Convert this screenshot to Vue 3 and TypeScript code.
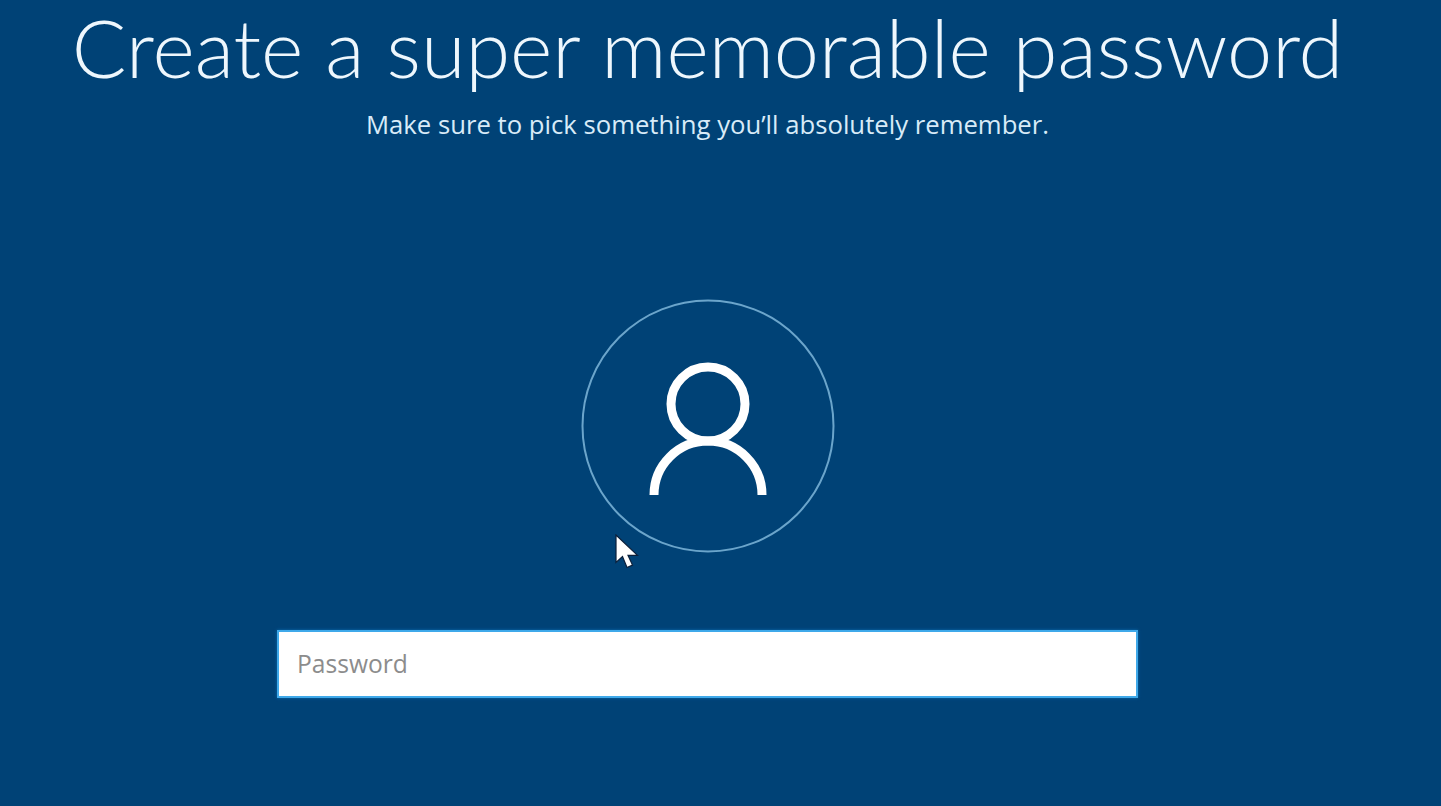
<script setup lang="ts">
import { ref } from 'vue'

const password = ref('')
</script>

<template>
  <main class="page">
    <h1 class="title">Create a super memorable password</h1>
    <p class="subtitle">Make sure to pick something you’ll absolutely remember.</p>

    <div class="avatar">
      <svg width="254" height="254" viewBox="0 0 254 254" fill="none">
        <circle cx="127" cy="127" r="125.5" stroke="#6ba5cb" stroke-width="2" />
        <circle cx="127" cy="105" r="37" stroke="#fff" stroke-width="9" />
        <path d="M73 196a54 54 0 0 1 108 0" stroke="#fff" stroke-width="9" />
      </svg>
      <svg class="cursor" width="24" height="36" viewBox="0 0 24 36">
        <path d="M1 1v27.500l6.500-6 4.500 11 5.500-2.400-4.500-9.800h9.500z" fill="#fff" stroke="#0b1f3a" stroke-width="1.200" />
      </svg>
    </div>

    <input v-model="password" class="password" type="password" placeholder="Password" />
  </main>
</template>

<style scoped>
.page {
  width: 1415px;
  height: 806px;
  box-sizing: border-box;
  display: flex;
  flex-direction: column;
  align-items: center;
  font-family: "Open Sans", "Liberation Sans", sans-serif;
  color: #fff;
}

.title {
  margin: 0;
  font-family: Lato, "Open Sans", sans-serif;
  font-size: 81px;
  line-height: 94px;
  font-weight: 300;
  white-space: nowrap;
  color: #eef7fd;
}

.subtitle {
  margin: 14px 0 0;
  font-size: 25.7px;
  line-height: 34px;
  font-weight: 400;
  white-space: nowrap;
  color: #d8ebf8;
}

.avatar {
  position: relative;
  width: 254px;
  height: 254px;
  margin-top: 157px;
}

.avatar svg {
  display: block;
}

.cursor {
  position: absolute;
  left: 34px;
  top: 235px;
}

.password {
  width: 861px;
  height: 68px;
  margin-top: 77px;
  padding: 0 18px 2px;
  box-sizing: border-box;
  border: 2px solid #3fa9ea;
  border-radius: 0;
  outline: none;
  background: #fff;
  box-shadow: 0 0 3px #0a6cb0;
  font-family: inherit;
  font-size: 24.6px;
  color: #333;
}

.password::placeholder {
  color: #8c8c8c;
  opacity: 1;
}
</style>

<style>
html,
body {
  margin: 0;
  height: 100%;
  background: #004276;
}
</style>
